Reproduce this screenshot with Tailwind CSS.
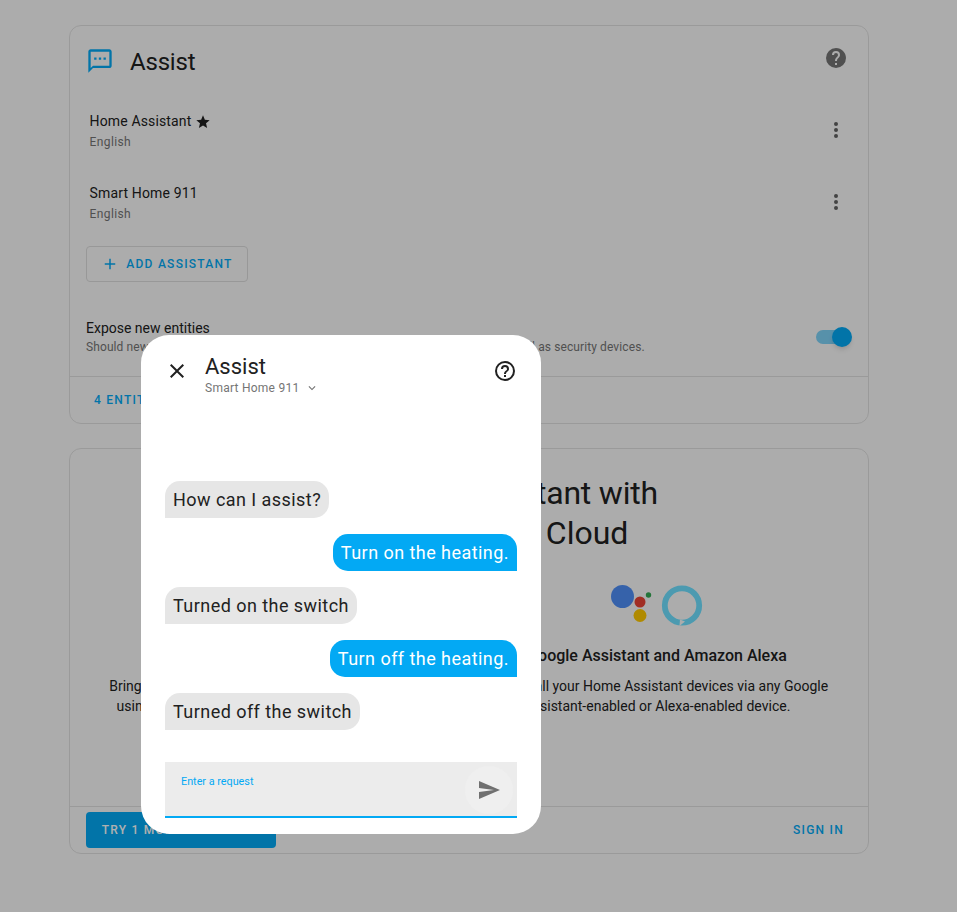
<!DOCTYPE html>
<html>
<head>
<meta charset="utf-8">
<script src="https://cdn.jsdelivr.net/npm/@tailwindcss/browser@4"></script>
</head>
<body class="m-0">
<div class="relative w-[957px] h-[912px] overflow-hidden bg-[#fafafa] font-['Roboto',sans-serif] text-[#212121]">
  <main class="flex flex-col gap-6 pt-[25px] pl-[69px]">
    <section class="w-[800px] h-[399px] flex flex-col border border-[#e0e0e0] rounded-xl">
      <header class="h-[70px] flex items-center pl-[16px] pr-[20px]">
        <svg class="w-7 h-7 text-[#03a9f4]" viewBox="0 0 24 24" fill="currentColor"><path d="M17 11h-2V9h2v2m-4 0h-2V9h2v2m-4 0H7V9h2v2"/><path d="M20 2H4c-1.100 0-2 .9-2 2v18l4-4h14c1.100 0 2-.9 2-2V4c0-1.100-.9-2-2-2zm0 14H6l-2 2V4h16v12z"/></svg>
        <h1 class="ml-[16px] mt-[1px] text-2xl font-normal leading-8 tracking-[-0.2px]">Assist</h1>
        <svg class="ml-auto mb-[6px] w-6 h-6 text-[#757575]" viewBox="0 0 24 24" fill="currentColor"><path d="M15.070 11.250l-.9.920C13.450 12.890 13 13.500 13 15h-2v-.5c0-1.110.45-2.110 1.170-2.830l1.240-1.260c.37-.36.59-.86.59-1.410a2 2 0 0 0-2-2 2 2 0 0 0-2 2H8a4 4 0 0 1 4-4 4 4 0 0 1 4 4c0 .88-.36 1.670-.93 2.250zM13 19h-2v-2h2v2zM12 2A10 10 0 0 0 2 12a10 10 0 0 0 10 10 10 10 0 0 0 10-10c0-5.530-4.500-10-10-10z"/></svg>
      </header>
      <div class="h-[72px] flex items-center pl-[19.500px] pr-[20px]">
        <div class="flex flex-col mb-[1px]">
          <div class="flex items-center gap-[4px] text-[14px] leading-[20px] tracking-[0.15px]">Home Assistant
            <svg class="w-4 h-4 mt-[1px]" viewBox="0 0 24 24" fill="currentColor"><path d="M12 17.270L18.180 21l-1.640-7.030L22 9.240l-7.190-.61L12 2 9.190 8.630 2 9.240l5.460 4.730L5.820 21z"/></svg>
          </div>
          <div class="mt-[1px] text-[12px] leading-[20px] tracking-[0.4px] text-[#757575]">English</div>
        </div>
        <svg class="ml-auto mb-[4px] w-6 h-6 text-[#616161]" viewBox="0 0 24 24" fill="currentColor"><path d="M12 16a2 2 0 1 1 0 4 2 2 0 0 1 0-4zm0-6a2 2 0 1 1 0 4 2 2 0 0 1 0-4zm0-6a2 2 0 1 1 0 4 2 2 0 0 1 0-4z"/></svg>
      </div>
      <div class="h-[72px] flex items-center pl-[19.500px] pr-[20px]">
        <div class="flex flex-col mb-[1px]">
          <div class="text-[14px] leading-[20px] tracking-[0.15px]">Smart Home 911</div>
          <div class="mt-[1px] text-[12px] leading-[20px] tracking-[0.4px] text-[#757575]">English</div>
        </div>
        <svg class="ml-auto mb-[4px] w-6 h-6 text-[#616161]" viewBox="0 0 24 24" fill="currentColor"><path d="M12 16a2 2 0 1 1 0 4 2 2 0 0 1 0-4zm0-6a2 2 0 1 1 0 4 2 2 0 0 1 0-4zm0-6a2 2 0 1 1 0 4 2 2 0 0 1 0-4z"/></svg>
      </div>
      <div class="pl-[16px] pt-[6px]">
        <button class="w-[162px] h-9 flex items-center justify-center gap-[7px] border border-[#dcdcdc] rounded-[4px] text-[#03a9f4] text-[12px] font-medium tracking-[1.25px]">
          <svg class="w-[18px] h-[18px]" viewBox="0 0 24 24" fill="currentColor"><path d="M19 13h-6v6h-2v-6H5v-2h6V5h2v6h6v2z"/></svg>
          ADD ASSISTANT
        </button>
      </div>
      <div class="mt-[36px] flex items-center pl-[16px] pr-[16px]">
        <div class="flex flex-col">
          <div class="text-[14px] leading-[20px]">Expose new entities</div>
          <div class="mt-[1px] text-[12px] leading-[17px] tracking-[0.1px] text-[#757575] whitespace-nowrap">Should new entities be exposed? Exposes everything except critical devices as well as security devices.</div>
        </div>
        <div class="relative ml-auto w-[36px] h-[20px] flex items-center">
          <div class="w-[32px] h-[14px] rounded-full bg-[#03a9f4]/50"></div>
          <div class="absolute right-0 w-[20px] h-[20px] rounded-full bg-[#03a9f4] shadow-md"></div>
        </div>
      </div>
      <div class="mt-auto h-[47px] flex items-center border-t border-[#e0e0e0] pl-[24px] text-[12px] font-medium tracking-[1.25px] text-[#03a9f4]">4 ENTITIES EXPOSED</div>
    </section>

    <section class="w-[800px] h-[406px] flex flex-col border border-[#e0e0e0] rounded-xl">
      <h2 class="mt-[24px] text-center text-[32px] leading-[40px] font-normal"><span class="tracking-[-0.2px]">Control your Assistant with</span><br>Home Assistant Cloud</h2>
      <div class="mt-[32px] grid grid-cols-2 gap-[30px] px-[38px] text-center">
        <div class="flex flex-col items-center">
          <div class="h-[42px]"></div>
          <h3 class="mt-[17px] text-[16px] leading-[24px] font-medium">Speech-to-text in your language</h3>
          <p class="mt-[8px] text-[14px] leading-[20px] whitespace-nowrap">Bring your voice assistants to your Home Assistant hub<br><span class="tracking-[0.08px]">using speech-to-text and text-to-speech in any voice.</span></p>
        </div>
        <div class="flex flex-col items-center">
          <svg class="w-[92px] h-[42px]" viewBox="0 0 92 42">
            <circle cx="11.500" cy="11.500" r="11.500" fill="#4f8ff7"/>
            <circle cx="29" cy="17" r="5.500" fill="#ea4335"/>
            <circle cx="37.500" cy="10" r="2.700" fill="#34a853"/>
            <circle cx="29" cy="30.500" r="6.500" fill="#ffc800"/>
            <circle cx="71" cy="20.500" r="17.200" fill="none" stroke="#6fe0ff" stroke-width="5.800"/>
            <path d="M68.500 41l.5-6.500 5 2z" fill="#fafafa"/>
          </svg>
          <h3 class="mt-[17px] text-[16px] leading-[24px] font-medium whitespace-nowrap">Google Assistant and Amazon Alexa</h3>
          <p class="mt-[8px] text-[14px] leading-[20px] whitespace-nowrap">Control all your Home Assistant devices via any Google<br>Assistant-enabled or Alexa-enabled device.</p>
        </div>
      </div>
      <footer class="mt-auto h-[47px] flex items-center justify-between border-t border-[#e0e0e0] pl-[16px] pr-[24px]">
        <button class="w-[190px] h-9 rounded-[4px] bg-[#03a9f4] text-white text-[12px] font-medium tracking-[1.25px]">TRY 1 MONTH FOR FREE</button>
        <span class="text-[12px] font-medium tracking-[1.25px] text-[#03a9f4]">SIGN IN</span>
      </footer>
    </section>
  </main>

  <div class="absolute inset-0 bg-black/31"></div>

  <div class="absolute left-[141px] top-[335px] w-[400px] h-[499px] bg-white rounded-[28px] flex flex-col px-[24px]">
    <header class="h-[72px] flex items-start pt-[18px]">
      <svg class="mt-[6px] w-6 h-6 text-[#212121]" viewBox="0 0 24 24" fill="currentColor"><path d="M19 6.410L17.590 5 12 10.590 6.410 5 5 6.410 10.590 12 5 17.590 6.410 19 12 13.410 17.590 19 19 17.590 13.410 12z"/></svg>
      <div class="ml-[16px] flex flex-col">
        <div class="text-[22px] leading-[28px]">Assist</div>
        <div class="flex items-center gap-[6px] text-[12px] leading-[13px] tracking-[0.25px] text-[#757575]">Smart Home 911
          <svg class="w-[14px] h-[14px]" viewBox="0 0 24 24" fill="currentColor"><path d="M7.410 8.580L12 13.170l4.590-4.590L18 10l-6 6-6-6z"/></svg>
        </div>
      </div>
      <svg class="ml-auto mt-[6px] w-6 h-6 text-[#212121]" viewBox="0 0 24 24" fill="currentColor"><path d="M11 18h2v-2h-2v2zm1-16A10 10 0 0 0 2 12a10 10 0 0 0 10 10 10 10 0 0 0 10-10A10 10 0 0 0 12 2zm0 18a8 8 0 1 1 0-16 8 8 0 0 1 0 16zm0-14a4 4 0 0 0-4 4h2a2 2 0 1 1 4 0c0 2-3 1.750-3 5h2c0-2.250 3-2.500 3-5a4 4 0 0 0-4-4z"/></svg>
    </header>
    <div class="mt-[74px] flex flex-col gap-[16px] text-[18px] leading-[21px] tracking-[0.45px]">
      <div class="self-start p-[8px] bg-[#e6e6e6] rounded-[15px] rounded-bl-none">How can I assist?</div>
      <div class="self-end p-[8px] bg-[#03a9f4] text-white rounded-[15px] rounded-br-none">Turn on the heating.</div>
      <div class="self-start p-[8px] bg-[#e6e6e6] rounded-[15px] rounded-bl-none">Turned on the switch</div>
      <div class="self-end p-[8px] bg-[#03a9f4] text-white rounded-[15px] rounded-br-none">Turn off the heating.</div>
      <div class="self-start p-[8px] bg-[#e6e6e6] rounded-[15px] rounded-bl-none">Turned off the switch</div>
    </div>
    <div class="mt-[32px] relative h-[56px] bg-[#ececec] border-b-2 border-[#03a9f4] pl-[16px] pt-[13px] text-[10.800px] leading-[14px] text-[#03a9f4]">
      Enter a request
      <div class="absolute right-[4px] top-[4px] w-[48px] h-[48px] rounded-full bg-[#efefef] flex items-center justify-center">
        <svg class="w-6 h-6 text-[#707070]" viewBox="0 0 24 24" fill="currentColor"><path d="M2 21l21-9L2 3v7l15 2-15 2v7z"/></svg>
      </div>
    </div>
  </div>
</div>
</body>
</html>
